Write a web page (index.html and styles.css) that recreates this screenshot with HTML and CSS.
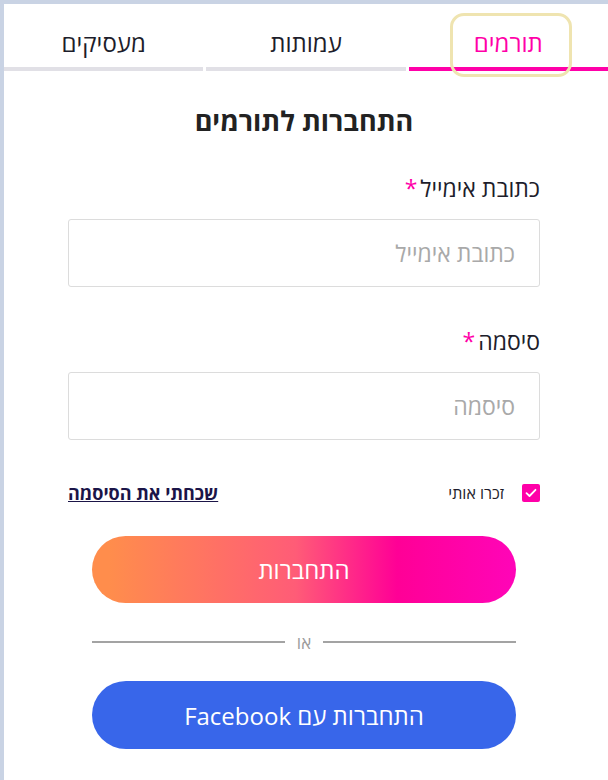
FILE: index.html
```html
<!DOCTYPE html>
<html lang="he" dir="rtl">
<head>
    <meta charset="UTF-8">
    <meta name="viewport" content="width=device-width, initial-scale=1.0">
    <title>התחברות לתורמים</title>
    <link rel="stylesheet" href="styles.css">
</head>
<body>
    <div class="page">
        <!-- לשוניות -->
        <nav class="tabs">
            <a class="tab tab-active" href="#">תורמים</a>
            <a class="tab" href="#">עמותות</a>
            <a class="tab" href="#">מעסיקים</a>
            <span class="tab-mark"></span>
        </nav>

        <main class="login">
            <h1 class="login-title">התחברות לתורמים</h1>

            <label class="field-label" for="email">כתובת אימייל<span class="req">*</span></label>
            <input class="field-input" type="email" id="email" placeholder="כתובת אימייל">

            <label class="field-label field-label-pass" for="password">סיסמה<span class="req">*</span></label>
            <input class="field-input" type="password" id="password" placeholder="סיסמה">

            <div class="remember-row">
                <label class="remember">
                    <span class="check-box">
                        <svg width="12" height="10" viewBox="0 0 12 10"><path d="M1.5 5.2 L4.5 8 L10.5 1.8" fill="none" stroke="#fff" stroke-width="1.8" stroke-linecap="round" stroke-linejoin="round"/></svg>
                    </span>
                    זכרו אותי
                </label>
                <a class="forgot" href="#">שכחתי את הסיסמה</a>
            </div>

            <button class="btn btn-login">התחברות</button>

            <div class="divider"><span>או</span></div>

            <button class="btn btn-facebook">התחברות עם Facebook</button>
        </main>
    </div>
</body>
</html>
```

FILE: styles.css
```css
/* רקע כללי ומסגרת */
body {
    margin: 0;
    background: #c9d3e4;
    font-family: "Open Sans", "DejaVu Sans", sans-serif;
    color: #222;
}
.page {
    margin: 4px 0 0 4px;
    height: 776px;
    background: #fff;
    overflow: hidden;
}

/* לשוניות */
.tabs {
    position: relative;
    display: flex;
    gap: 3px;
    height: 67px;
}
.tab {
    flex: 1;
    display: flex;
    align-items: center;
    justify-content: center;
    padding-top: 14px;
    font-size: 24px;
    color: #1d1d2b;
    text-decoration: none;
    border-bottom: 4px solid #e1e0e6;
}
.tab-active {
    color: #ff00a8;
    border-bottom-color: #ff00a8;
}
/* מסגרת הסימון סביב הלשונית */
.tab-mark {
    position: absolute;
    top: 9px;
    right: 36px;
    width: 122px;
    height: 64px;
    box-sizing: border-box;
    border: 3px solid #efe4b0;
    border-radius: 14px;
}

/* טופס */
.login {
    width: 472px;
    margin-right: 68px;
    display: flex;
    flex-direction: column;
}
.login-title {
    margin: 31px 0 0;
    font-size: 27px;
    font-weight: 700;
    text-align: center;
    line-height: 38px;
}
.field-label {
    margin-top: 32px;
    font-size: 23px;
    line-height: 32px;
    color: #1d1d2b;
}
.field-label-pass {
    margin-top: 38px;
}
.req {
    color: #ff00a8;
    margin-right: 3px;
}
.field-input {
    margin-top: 15px;
    height: 68px;
    box-sizing: border-box;
    padding: 0 24px;
    border: 1px solid #dcdcdc;
    border-radius: 3px;
    font-family: inherit;
    font-size: 23px;
    color: #222;
}
.field-input::placeholder {
    color: #a9a9a9;
}

/* זכור אותי / שכחתי */
.remember-row {
    margin-top: 43px;
    display: flex;
    justify-content: space-between;
    align-items: center;
    height: 20px;
}
.remember {
    display: flex;
    align-items: center;
    gap: 18px;
    font-size: 16px;
    color: #1d1d2b;
}
.check-box {
    width: 18px;
    height: 18px;
    border-radius: 2px;
    background: #ff00a8;
    display: flex;
    align-items: center;
    justify-content: center;
}
.forgot {
    font-size: 18px;
    font-weight: 700;
    color: #1b1548;
    text-decoration: underline;
}

/* כפתורים */
.btn {
    margin: 0 24px;
    height: 67px;
    border: none;
    border-radius: 34px;
    font-family: inherit;
    font-size: 24px;
    color: #fff;
    cursor: pointer;
}
.btn-login {
    margin-top: 33px;
    background: linear-gradient(to right, #ff8d4c 4%, #ff5c77 48%, #ff0096 72%, #ff05b8 100%);
}
.btn-facebook {
    height: 68px;
    background: #3866ea;
}
.divider {
    margin: 19px 24px 19px;
    height: 40px;
    display: flex;
    align-items: center;
    gap: 12px;
    color: #9c9c9c;
    font-size: 17px;
}
.divider::before,
.divider::after {
    content: "";
    flex: 1;
    height: 2px;
    background: #a3a3a3;
}
```
